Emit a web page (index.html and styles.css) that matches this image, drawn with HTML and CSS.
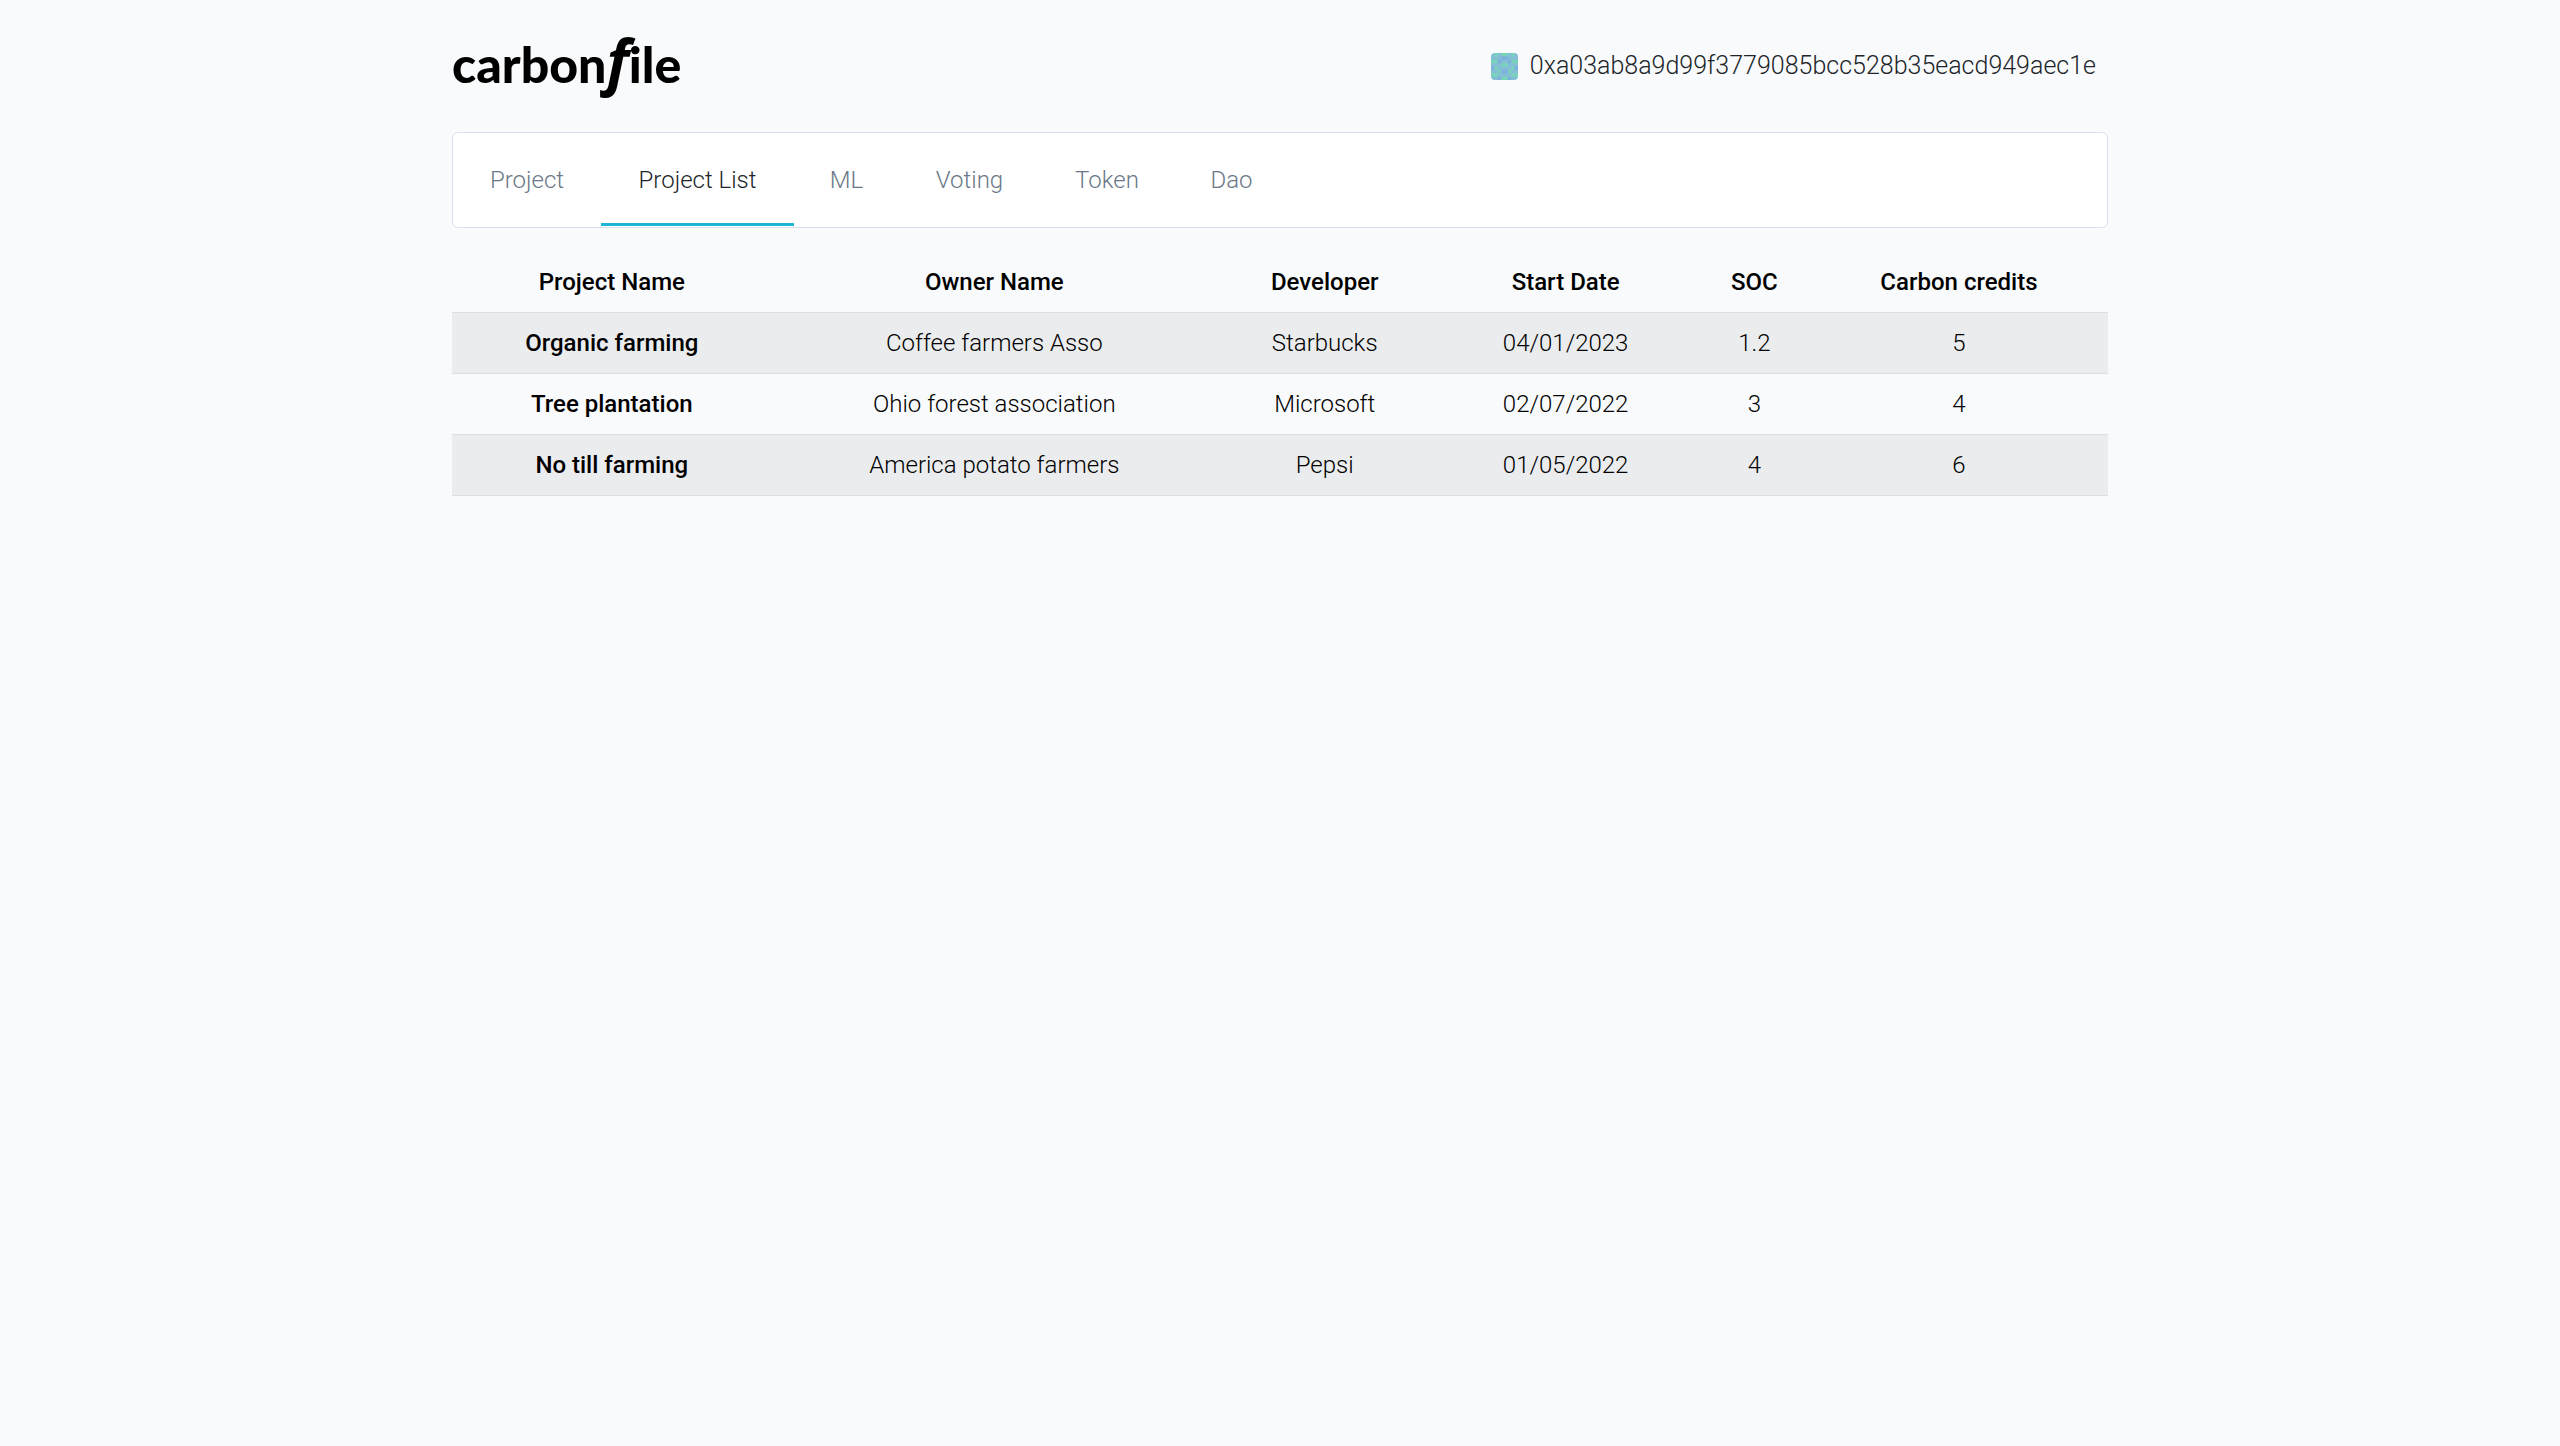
FILE: index.html
```html
<!DOCTYPE html>
<html lang="en">
<head>
<meta charset="utf-8">
<title>carbonfile</title>
<link rel="stylesheet" href="styles.css">
</head>
<body>
<div class="container">
  <header class="header">
    <a class="logo" href="#">carbon<span class="swash">f</span>ile</a>
    <div class="account">
      <svg class="avatar" viewBox="0 0 8 8" aria-hidden="true">
        <rect width="8" height="8" fill="#83bdd6"/>
        <path fill="#79d3b9" d="M1 0h1v1H1zM6 0h1v1H6zM3 0h2v1H3zM0 2h2v1H0zM6 2h2v1H6zM3 3h2v1H3zM1 4h1v1H1zM6 4h1v1H6zM2 5h1v1H2zM5 5h1v1H5zM0 6h2v1H0zM6 6h2v1H6zM3 7h2v1H3z"/>
        <path fill="#7db0dc" d="M3 1h2v1H3zM2 2h1v1H2zM5 2h1v1H5zM0 4h1v1H0zM7 4h1v1H7zM3 5h2v1H3zM2 7h1v1H2zM5 7h1v1H5z"/>
      </svg>
      <span>0xa03ab8a9d99f3779085bcc528b35eacd949aec1e</span>
    </div>
  </header>
  <nav class="tabs">
    <a class="tab" href="#">Project</a>
    <a class="tab active" href="#" aria-current="page">Project List</a>
    <a class="tab" href="#">ML</a>
    <a class="tab" href="#">Voting</a>
    <a class="tab" href="#">Token</a>
    <a class="tab" href="#">Dao</a>
  </nav>
  <table class="projects">
    <colgroup><col class="c-name"><col class="c-owner"><col class="c-dev"><col class="c-date"><col class="c-soc"><col class="c-credits"></colgroup>
    <thead>
      <tr><th scope="col">Project Name</th><th scope="col">Owner Name</th><th scope="col">Developer</th><th scope="col">Start Date</th><th scope="col">SOC</th><th scope="col">Carbon credits</th></tr>
    </thead>
    <tbody>
      <tr><th scope="row">Organic farming</th><td>Coffee farmers Asso</td><td>Starbucks</td><td>04/01/2023</td><td>1.2</td><td>5</td></tr>
      <tr><th scope="row">Tree plantation</th><td>Ohio forest association</td><td>Microsoft</td><td>02/07/2022</td><td>3</td><td>4</td></tr>
      <tr><th scope="row">No till farming</th><td>America potato farmers</td><td>Pepsi</td><td>01/05/2022</td><td>4</td><td>6</td></tr>
    </tbody>
  </table>
</div>
</body>
</html>
```
FILE: styles.css
```css
* { box-sizing: border-box; }
body {
  margin: 0;
  background: #f8fafc;
  color: #212529;
  font: 300 24px/36px Roboto, "Open Sans", sans-serif;
}
.container {
  max-width: 1704px;
  margin: 0 auto;
  padding: 0 24px;
}
.header {
  display: flex;
  align-items: center;
  justify-content: space-between;
  height: 132px;
  padding-right: 12px;
}
.logo {
  padding-bottom: 4px;
  color: #000;
  font: 900 50px/80px Lato, sans-serif;
  text-decoration: none;
}
.swash { font: italic 700 60px/1 "Open Sans", sans-serif; }
.account { display: flex; align-items: center; gap: 12px; font-size: 25px; }
.avatar { width: 27px; height: 27px; border-radius: 4px; }
.tabs {
  display: grid;
  grid-template-columns: 148px 193px 105px 141px 134px 115px;
  height: 96px;
  padding-bottom: 1px;
  background: #fff;
  border: 1px solid #d9e2ec;
  border-radius: 6px;
}
.tab {
  display: flex;
  align-items: center;
  justify-content: center;
  padding-top: 4px;
  border-bottom: 3px solid transparent;
  color: #6b7887;
  text-decoration: none;
}
.tab.active { color: #212529; border-bottom-color: #1fb5d4; }
.projects {
  width: 100%;
  margin-top: 24px;
  border-collapse: collapse;
  table-layout: fixed;
  background: #f9fafb;
  color: #000;
  text-align: center;
}
.projects th, .projects td { padding: 12px; border-bottom: 1px solid #dcdee0; }
.projects th { font-weight: 500; }
.projects tbody tr:nth-child(odd) { background: #ebecee; }
.c-name { width: 19.3%; }
.c-owner { width: 26.9%; }
.c-dev { width: 13%; }
.c-date { width: 16.1%; }
.c-soc { width: 6.7%; }
.c-credits { width: 18%; }
```
